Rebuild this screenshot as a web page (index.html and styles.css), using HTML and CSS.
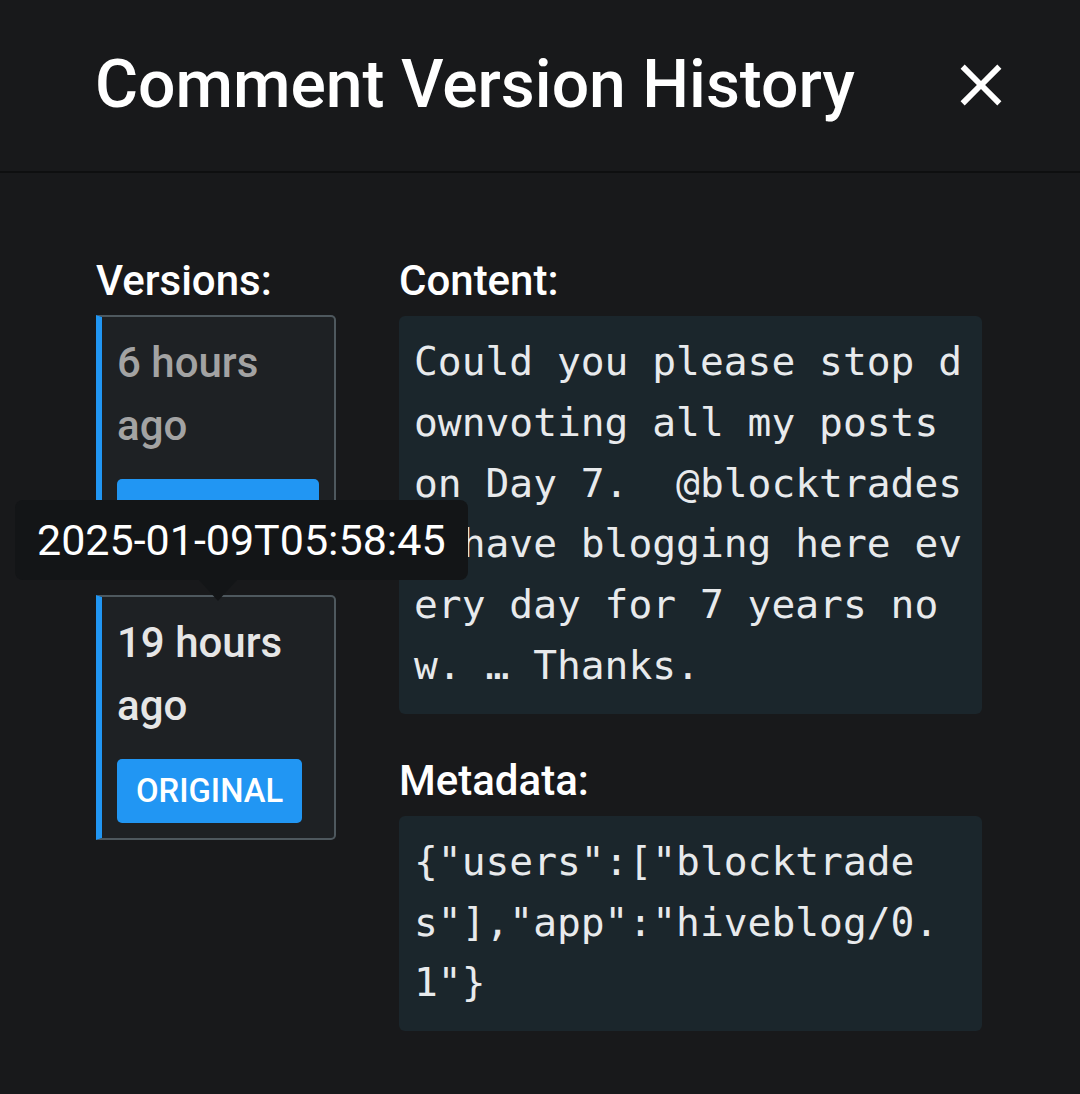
FILE: index.html
```html
<!DOCTYPE html>
<html lang="en">
<head>
<meta charset="utf-8">
<title>Comment Version History</title>
<link rel="stylesheet" href="styles.css">
</head>
<body>
<div class="dialog">
  <header class="dialog-header">
    <h1 class="title">Comment Version History</h1>
    <button class="close" aria-label="Close">
      <svg viewBox="0 0 24 24" width="70" height="70"><path d="M19 6.41L17.59 5 12 10.59 6.41 5 5 6.41 10.59 12 5 17.59 6.41 19 12 13.41 17.59 19 19 17.59 13.41 12z"/></svg>
    </button>
  </header>
  <main class="dialog-body">
    <section class="versions">
      <h2 class="label label-versions">Versions:</h2>
      <div class="version-list">
        <div class="version-card muted">
          <div class="version-time">6 hours ago</div>
          <span class="tag tag-block">CURRENT</span>
        </div>
        <div class="version-card active">
          <div class="tooltip">2025-01-09T05:58:45</div>
          <div class="version-time">19 hours ago</div>
          <span class="tag">ORIGINAL</span>
        </div>
      </div>
    </section>
    <section class="details">
      <h2 class="label">Content:</h2>
      <pre class="code">Could you please stop downvoting all my posts on Day 7.  @blocktrades I have blogging here every day for 7 years now. … Thanks.</pre>
      <h2 class="label label-gap">Metadata:</h2>
      <pre class="code">{"users":["blocktrades"],"app":"hiveblog/0.1"}</pre>
    </section>
  </main>
</div>
</body>
</html>
```

FILE: styles.css
```css
* { box-sizing: border-box; }

html, body {
  margin: 0;
  padding: 0;
  background: #18191b;
}

body {
  font-family: Roboto, "Noto Sans", "Liberation Sans", sans-serif;
  color: #ffffff;
  width: 1080px;
  height: 1094px;
  overflow: hidden;
}

.dialog {
  background: #18191b;
  min-height: 1094px;
}

.dialog-header {
  height: 173px;
  display: flex;
  align-items: center;
  justify-content: space-between;
  padding: 0 64px 2px 95px;
  border-bottom: 2px solid #0e0f10;
}

.title {
  margin: 0;
  font-size: 66px;
  font-weight: 500;
  line-height: 80px;
  color: #ffffff;
}

.close {
  background: none;
  border: 0;
  padding: 0;
  margin: 0;
  width: 70px;
  height: 70px;
  display: flex;
  cursor: pointer;
}

.close svg {
  fill: #ffffff;
  display: block;
}

.dialog-body {
  display: grid;
  grid-template-columns: 240px 1fr;
  column-gap: 63px;
  padding: 83px 98px 0 96px;
  align-items: start;
}

.label {
  margin: 0 0 11px;
  font-size: 42px;
  font-weight: 500;
  line-height: 49px;
  color: #ffffff;
}

.label-versions {
  margin-bottom: 10px;
}

.label-gap {
  margin-top: 42px;
}

.version-list {
  display: flex;
  flex-direction: column;
  gap: 35px;
}

.version-card {
  position: relative;
  background: #1e2124;
  border: 2px solid #4e585e;
  border-left: 6px solid #2196f3;
  border-radius: 0 5px 5px 0;
  padding: 14px 15px 15px;
}

.version-time {
  font-size: 42px;
  font-weight: 500;
  line-height: 63px;
}

.muted .version-time { color: #a3a3a3; }
.active .version-time { color: #e6e6e6; }

.tag {
  display: inline-block;
  margin-top: 22px;
  background: #2196f3;
  color: #ffffff;
  font-size: 32.8px;
  font-weight: 500;
  line-height: 38px;
  padding: 13px 19px;
  border-radius: 5px;
}

.tag-block {
  display: block;
  padding: 16px 19px 10px;
}

.tooltip {
  position: absolute;
  z-index: 10;
  top: -97px;
  left: -87px;
  background: #131517;
  color: #ffffff;
  font-size: 43px;
  font-weight: 400;
  line-height: 48px;
  padding: 16px 22px;
  border-radius: 8px;
  white-space: nowrap;
}

.tooltip::after {
  content: "";
  position: absolute;
  top: 100%;
  left: 184px;
  border-left: 19px solid transparent;
  border-right: 19px solid transparent;
  border-top: 21px solid #131517;
}

.code {
  margin: 0;
  background: #1b262c;
  border-radius: 6px;
  padding: 15px 15px 18px;
  font-family: "DejaVu Sans Mono", "Liberation Mono", monospace;
  font-size: 39.6px;
  line-height: 60.8px;
  color: #e8eaec;
  white-space: pre-wrap;
  word-break: break-all;
}
```
